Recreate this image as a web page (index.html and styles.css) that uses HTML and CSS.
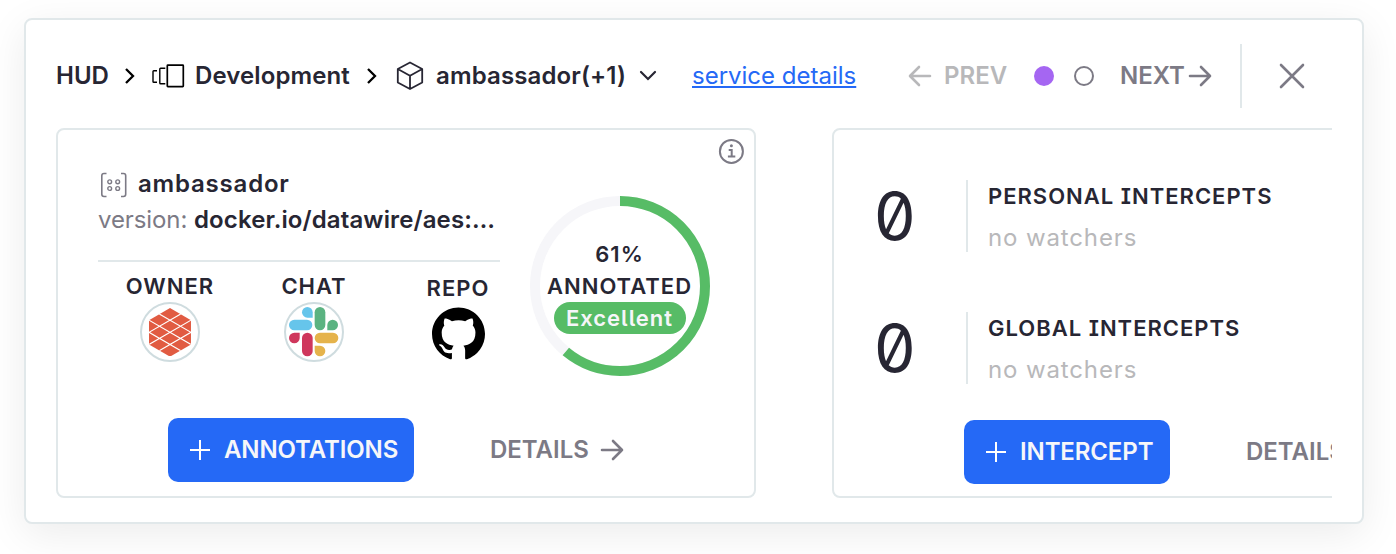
FILE: index.html
```html
<!DOCTYPE html>
<html lang="en">
<head>
<meta charset="utf-8">
<title>HUD</title>
<link rel="stylesheet" href="styles.css">
</head>
<body>
<main class="panel">
  <header class="header">
    <span class="crumb">HUD</span>
    <svg class="icon" width="12" height="18" viewBox="0 0 12 18"><path d="M2 2l7 7-7 7" fill="none" stroke="#000" stroke-width="2.3"/></svg>
    <svg class="icon" width="34" height="24" viewBox="0 0 34 24" fill="none" stroke="#000"><rect x="15.3" y="1.2" width="16" height="21.4" rx=".6" stroke-width="1.7"/><path d="M13.3 4.2H8.6q-.8 0-.8.8v14q0 .8.8.8h4.7M5 6.7H1.8q-.8 0-.8.8v9.9q0 .8.8.8H5" stroke-width="1.4"/></svg>
    <span class="crumb crumb-env">Development</span>
    <svg class="icon" width="12" height="18" viewBox="0 0 12 18"><path d="M2 2l7 7-7 7" fill="none" stroke="#000" stroke-width="2.3"/></svg>
    <svg class="icon box-icon" width="28" height="30" viewBox="0 0 28 30" fill="none" stroke="#272633" stroke-width="1.800" stroke-linejoin="round"><path d="M14 1.500l12.200 6.500v13.500L14 28 1.800 21.500V8zM1.800 8L14 14.800 26.200 8M14 14.800V28"/></svg>
    <span class="crumb crumb-service">ambassador(+1)</span>
    <svg class="icon" width="18" height="12" viewBox="0 0 18 12"><path d="M2 2l7 7 7-7" fill="none" stroke="#272633" stroke-width="2.2" stroke-linecap="round"/></svg>
    <a class="service-link" href="#">service details</a>
    <svg class="icon" width="24" height="22" viewBox="0 0 24 22"><path d="M22 11H2.500M11 2l-9 9 9 9" fill="none" stroke="#b8b8ba" stroke-width="2.600" stroke-linecap="round" stroke-linejoin="round"/></svg>
    <span class="nav prev">PREV</span>
    <i class="dot dot-on"></i>
    <i class="dot"></i>
    <span class="nav">NEXT</span>
    <svg class="icon" width="24" height="22" viewBox="0 0 24 22"><path d="M2 11h20M13 2l9 9-9 9" fill="none" stroke="#7c7a85" stroke-width="2.600" stroke-linecap="round" stroke-linejoin="round"/></svg>
    <i class="divider"></i>
    <svg class="icon close" width="26" height="26" viewBox="0 0 26 26"><path d="M2 2l22 22M24 2L2 24" stroke="#7c7a85" stroke-width="2.600" stroke-linecap="round"/></svg>
  </header>

  <div class="cards">
    <section class="card">
      <div class="summary">
        <div class="meta">
          <div class="name">
            <svg width="28" height="26" viewBox="0 0 28 26" fill="none" stroke="#7c7a85"><path d="M6.500 1.500H4Q1.800 1.500 1.800 3.700v18.600q0 2.200 2.200 2.200h2.500M21 1.500h2.500q2.200 0 2.200 2.200v18.600q0 2.200-2.200 2.200H21" stroke-width="1.600"/><g stroke-width="1.400"><circle cx="9.700" cy="9.800" r="1.900"/><circle cx="17.700" cy="9.800" r="1.900"/><circle cx="9.700" cy="16.500" r="1.900"/><circle cx="17.700" cy="16.500" r="1.900"/></g></svg>
            <span class="name-text">ambassador</span>
          </div>
          <div class="version"><span class="version-label">version:</span><span class="version-value">docker.io/datawire/aes:…</span></div>
          <div class="links">
            <div class="link">
              <span class="label">OWNER</span>
              <span class="avatar"><svg width="42" height="48.670" viewBox="177 143 126 146"><clipPath id="hex"><path d="M240 143l63 36.500v73L240 289l-63-36.500v-73z"/></clipPath><g clip-path="url(#hex)"><path d="M177 143h126v146H177z" fill="#e15b42"/><path d="M177 143l126 73M177 179.500l126 73M177 216l126 73M303 143l-126 73M303 179.500l-126 73M303 216l-126 73" stroke="#fff" stroke-width="3.500"/></g></svg></span>
            </div>
            <div class="link">
              <span class="label">CHAT</span>
              <span class="avatar"><svg width="49.330" height="49.330" viewBox="598 142 148 148"><g fill="#66c5eb"><rect x="598" y="180" width="70" height="32" rx="16"/><path d="M669 174h-16a16 16 0 1 1 16-16z"/></g><g fill="#5bb381"><rect x="675" y="142" width="32" height="70" rx="16"/><path d="M713 212v-16a16 16 0 1 1 16 16z"/></g><g fill="#cf375c"><rect x="637" y="219" width="32" height="71" rx="16"/><path d="M630 219v16a16 16 0 1 1-16-16z"/></g><g fill="#e5b34b"><rect x="675" y="219" width="71" height="32" rx="16"/><path d="M675 258h16a16 16 0 1 1-16 16z"/></g></svg></span>
            </div>
            <div class="link link-repo">
              <span class="label">REPO</span>
              <svg class="github" width="53" height="53" viewBox="0 0 16 15.700"><path d="M8 0C3.580 0 0 3.580 0 8c0 3.540 2.290 6.530 5.470 7.590.4.070.55-.17.55-.38 0-.19-.01-.82-.01-1.490-2.010.37-2.530-.49-2.690-.94-.09-.23-.48-.94-.82-1.130-.28-.15-.68-.52-.01-.53.63-.01 1.080.58 1.230.82.72 1.210 1.870.87 2.330.66.07-.52.28-.87.51-1.070-1.780-.2-3.640-.89-3.640-3.950 0-.87.31-1.590.82-2.150-.08-.2-.36-1.020.08-2.120 0 0 .67-.21 2.200.82.64-.18 1.320-.27 2-.27s1.360.09 2 .27c1.530-1.040 2.200-.82 2.200-.82.44 1.100.16 1.920.08 2.120.51.56.82 1.270.82 2.150 0 3.070-1.870 3.750-3.650 3.950.29.25.54.73.54 1.480 0 1.070-.01 1.930-.01 2.200 0 .21.15.46.55.38A8.010 8.010 0 0 0 16 8c0-4.420-3.580-8-8-8z"/></svg>
            </div>
          </div>
        </div>
        <div class="gauge">
          <svg class="ring" width="180" height="180" viewBox="0 0 180 180" fill="none" stroke-width="10"><circle cx="90" cy="90" r="85" stroke="#f6f6f9"/><circle cx="90" cy="90" r="85" stroke="#57bc66" pathLength="100" stroke-dasharray="61 100" transform="rotate(-90 90 90)"/></svg>
          <div class="gauge-text">
            <span>61%</span>
            <span class="annotated">ANNOTATED</span>
            <span class="pill">Excellent</span>
          </div>
        </div>
        <svg class="info" width="26" height="26" viewBox="0 0 26 26" fill="none" stroke="#7c7a85" stroke-width="2"><circle cx="13.400" cy="13.400" r="11.500"/><path d="M10.700 11.900H13.700V18.400M9.900 18.600h7.400"/><circle cx="13.400" cy="7.800" r="1.500" fill="#7c7a85" stroke="none"/></svg>
      </div>
      <div class="actions">
        <button class="primary"><svg width="20" height="20" viewBox="0 0 20 20"><path d="M0 10h20M10 0v20" stroke="#fff" stroke-width="2"/></svg><span>ANNOTATIONS</span></button>
        <a class="details" href="#"><span>DETAILS</span><svg width="24" height="22" viewBox="0 0 24 22"><path d="M2 11h20M13 2l9 9-9 9" fill="none" stroke="#7c7a85" stroke-width="2.600" stroke-linecap="round" stroke-linejoin="round"/></svg></a>
      </div>
    </section>

    <section class="card card-intercepts">
      <div class="stat">
        <span class="count">0</span>
        <div class="stat-body"><span class="stat-title">PERSONAL INTERCEPTS</span><span class="stat-note">no watchers</span></div>
      </div>
      <div class="stat">
        <span class="count">0</span>
        <div class="stat-body"><span class="stat-title">GLOBAL INTERCEPTS</span><span class="stat-note">no watchers</span></div>
      </div>
      <div class="actions">
        <button class="primary"><svg width="20" height="20" viewBox="0 0 20 20"><path d="M0 10h20M10 0v20" stroke="#fff" stroke-width="2"/></svg><span>INTERCEPT</span></button>
        <a class="details" href="#"><span>DETAILS</span></a>
      </div>
    </section>
  </div>
</main>
</body>
</html>
```

FILE: styles.css
```css
* { box-sizing: border-box; }

body {
  margin: 0;
  padding: 18px 32px 0 24px;
  height: 554px;
  overflow: hidden;
  background: #fff;
  color: #272633;
  font: 400 24px/32px Inter, "Liberation Sans", sans-serif;
  white-space: nowrap;
}

svg { display: block; flex: none; }

.panel {
  width: 1340px;
  height: 506px;
  padding: 24px 30px;
  border: 2px solid #e1e8ea;
  border-radius: 8px;
  background: #fff;
  box-shadow: 0 10px 40px rgba(0, 0, 0, .08);
}

.header {
  display: grid;
  grid-template-columns: 68px 28px 43px 171px 30px 40px 203px 53px 216px 36px 90px 40px 46px 68px 52px 39px 26px;
  align-items: center;
  height: 64px;
}

.crumb { font-weight: 600; }
.crumb-env { letter-spacing: .1px; }
.crumb-service { letter-spacing: .13px; }

.service-link {
  justify-self: start;
  color: #2569f6;
  text-decoration: underline 2px;
  text-underline-offset: 2px;
}

.nav { color: #7c7a85; font-weight: 600; }
.prev { color: #b8b8ba; }

.dot {
  width: 20px;
  height: 20px;
  border: 2px solid #7c7a85;
  border-radius: 50%;
}
.dot-on { border: 0; background: #a566f2; }

.divider { width: 2px; height: 64px; background: #e1e8ea; }

.cards {
  display: flex;
  gap: 76px;
  margin-top: 20px;
  overflow: hidden;
}

.card {
  flex: none;
  width: 700px;
  height: 370px;
  border: 2px solid #e1e8ea;
  border-radius: 8px;
}

.summary { display: flex; height: 288px; }

.meta { width: 402px; margin: 38px 30px 0 40px; }

.name { display: flex; align-items: center; gap: 10px; height: 32px; padding-left: 2px; }
.name svg { margin-top: 2px; }
.name-text { font-weight: 600; letter-spacing: .8px; }

.version { display: flex; height: 32px; margin-top: 4px; }
.version-label { width: 96px; color: #7c7a85; letter-spacing: -.1px; }
.version-value { font-weight: 600; letter-spacing: .12px; }

.links {
  display: grid;
  grid-template-columns: repeat(3, 144px);
  margin-top: 24px;
  padding-top: 8px;
  border-top: 2px solid #e1e8ea;
}
.link { display: flex; flex-direction: column; align-items: center; }
.link-repo { padding-top: 2px; }
.label { font-size: 22px; font-weight: 600; letter-spacing: 1px; }

.avatar {
  display: flex;
  align-items: center;
  justify-content: center;
  width: 60px;
  height: 60px;
  border: 2px solid #cfdcdf;
  border-radius: 50%;
}
.github { margin-top: 3px; }

.gauge { display: grid; width: 180px; height: 180px; margin-top: 66px; }
.ring, .gauge-text { grid-area: 1 / 1; }
.gauge-text {
  display: flex;
  flex-direction: column;
  align-items: center;
  padding: 42px 1px 0 0;
  font-size: 22px;
  font-weight: 600;
  letter-spacing: 1px;
}
.pill {
  width: 132px;
  border-radius: 16px;
  background: #57bc66;
  color: #f6f6f9;
  text-align: center;
  font-feature-settings: "ss02";
}

.info { margin: 8px 0 0 8px; }

.actions { display: flex; gap: 76px; padding-left: 110px; }

.primary {
  display: flex;
  align-items: center;
  gap: 14px;
  width: 246px;
  height: 64px;
  padding: 0 0 0 22px;
  border: 0;
  border-radius: 10px;
  background: #2569f6;
  color: #f6f6f9;
  font: 600 24px/32px Inter, sans-serif;
  letter-spacing: -.12px;
}

.details {
  display: flex;
  align-items: center;
  gap: 11px;
  color: #7c7a85;
  font-weight: 600;
  text-decoration: none;
}

.card-intercepts { padding-top: 50px; }
.stat { display: flex; height: 72px; margin-bottom: 60px; }
.count {
  width: 132px;
  padding-left: 40px;
  font-size: 66px;
  line-height: 72px;
  font-feature-settings: "zero";
}
.stat-body {
  display: flex;
  flex-direction: column;
  gap: 10px;
  padding-left: 20px;
  border-left: 2px solid #e1e8ea;
}
.stat-title { font-size: 22px; font-weight: 600; letter-spacing: 1px; font-feature-settings: "ss02"; }
.stat-note { color: #b8b8ba; letter-spacing: .87px; }
.card-intercepts .actions { margin-top: -24px; padding-left: 130px; }
.card-intercepts .primary { width: 206px; }
```
